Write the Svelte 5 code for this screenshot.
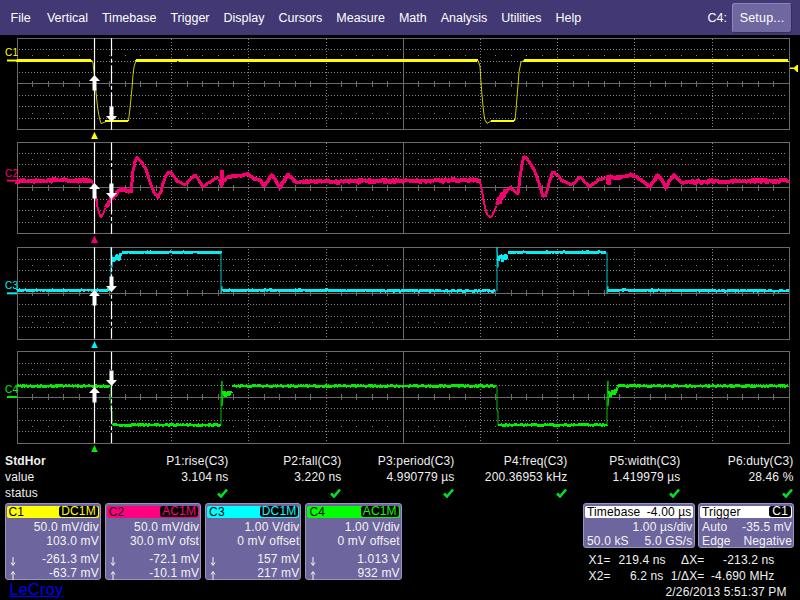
<script>
  // scope screen: four stacked grids, measurement table, channel descriptors
  const menu = ['File', 'Vertical', 'Timebase', 'Trigger', 'Display', 'Cursors', 'Measure', 'Math', 'Analysis', 'Utilities', 'Help'];

  const LEFT = 17.3, RIGHT = 789.3, H = 91.4;
  const DIV = (RIGHT - LEFT) / 10, MINOR = DIV / 5;
  const majors = Array.from({ length: 9 }, (_, i) => LEFT + DIV * (i + 1));
  const minors = Array.from({ length: 49 }, (_, i) => LEFT + MINOR * (i + 1));

  // tiny seeded noise so the traces come out the same on every load
  let seed = 12345;
  const rnd = () => (seed = (seed * 16807) % 2147483647) / 2147483647;

  function trace(pts, amp) {
    if (!amp) return pts.map((p) => p.join(',')).join(' ');
    const out = [];
    for (let i = 0; i < pts.length - 1; i++) {
      const [x0, y0] = pts[i], [x1, y1] = pts[i + 1];
      for (let x = x0; x < x1; x += 0.5) {
        let n = (rnd() - 0.5) * 2 * amp;
        if (rnd() < 0.05) n *= 2.2;
        out.push(x + ',' + (y0 + ((y1 - y0) * (x - x0)) / (x1 - x0) + n).toFixed(1));
      }
    }
    return out.join(' ');
  }

  const shift = (pts, dx) => pts.map(([x, y]) => [x + dx, y]);

  const c1 = [
    [2.8, 0.4, [[17, 60.5], [92, 60.5]]],
    [1, 0, [[92, 60.5], [93, 63], [94, 72], [95, 82], [96, 92], [97, 102], [98, 110], [99, 116], [100, 120], [101, 123.5], [104, 122.5], [108, 120.5]]],
    [2, 0, [[105, 121.5], [128.5, 120.5]]],
    [1, 0, [[128.5, 120.5], [130, 108], [131, 98], [132, 88], [133, 75], [134, 67], [136, 60.5]]],
    [2.8, 0.4, [[136, 60.5], [478, 60.5]]],
    [1, 0, [[478, 60.5], [480, 66], [481, 82], [482, 95], [483, 106], [484, 115], [485, 120], [487, 123.5], [491, 121]]],
    [2, 0, [[491, 121], [515, 120.5]]],
    [1, 0, [[515, 120.5], [516, 110], [517, 97], [518, 85], [519, 72], [521, 62], [524, 60.5]]],
    [2.8, 0.4, [[524, 60.5], [789, 60.5]]]
  ];

  const c2 = [
    [3.8, 1.6, [[17, 181], [92, 181]]],
    [2, 0.5, [[92, 181], [94, 190], [96, 198], [98, 210], [101, 218], [103, 214], [106, 207]]],
    [3.8, 1.6, [[106, 207], [111, 200], [114, 196], [118, 192], [122, 189], [127, 192], [131, 193]]],
    [3, 0.8, [[131, 193], [133, 172], [135, 162], [137, 158], [140, 161], [144, 166], [147, 172], [150, 182], [154, 193], [158, 198], [161, 192], [163, 184], [166, 176], [168, 172], [172, 174], [176, 180], [180, 183], [185, 185], [190, 180], [195, 175], [199, 181], [203, 187], [209, 183], [213, 180], [218, 178]]],
    [3, 5.5, [[219, 179], [226, 181]]],
    [3.6, 1, [[226, 178], [235, 176], [242, 176], [248, 174], [254, 179], [260, 180], [264, 187], [272, 175], [276, 181], [280, 188], [284, 181], [288, 175], [296, 183], [302, 182]]],
    [3.8, 1.6, [[302, 182], [480, 180.5]]],
    [2, 0.5, [[480, 181], [482, 192], [484, 203], [486, 212], [488, 216], [491, 218], [494, 212], [497, 205]]],
    [3.4, 4.5, [[497, 203], [505, 193]]],
    [3, 0.8, [[505, 193], [510, 188], [513, 190], [516, 193], [518, 194], [520, 178], [522, 165], [524, 157], [527, 159], [530, 164], [534, 170], [538, 180], [541, 190], [543, 197], [546, 195], [550, 180], [553, 172], [557, 175], [562, 181], [571, 185], [575, 183], [580, 177], [585, 182], [589, 187], [595, 183], [600, 179], [606, 178]]],
    [3, 6, [[607, 179], [613, 181]]],
    [3.6, 1, [[613, 179], [620, 178], [632, 175], [637, 178], [642, 181], [650, 187], [654, 181], [658, 175], [662, 181], [666, 188], [670, 180], [674, 175], [678, 179], [683, 184], [690, 182]]],
    [3.8, 1.6, [[690, 182], [789, 181]]]
  ];

  const c3Edge = [[111, 291], [111, 247], [112, 267], [112, 255]];
  const c3Ring = [[112, 258], [116, 258], [122, 255]];
  const c3Fall = [[221, 252], [221, 293], [222, 286], [222, 289]];
  const c3 = [
    [2.8, 0.7, [[17, 290], [110, 290]]],
    [1, 0, c3Edge],
    [2.4, 3.5, c3Ring],
    [2.8, 0.6, [[122, 252], [221, 252]]],
    [1, 0, c3Fall],
    [2.8, 0.7, [[222, 290], [496, 290.5]]],
    [1, 0, shift(c3Edge, 386)],
    [2.4, 3.5, shift(c3Ring, 386)],
    [2.8, 0.6, [[508, 252], [607, 252]]],
    [1, 0, shift(c3Fall, 386)],
    [2.8, 0.7, [[608, 290], [789, 290.5]]]
  ];

  const c4Fall = [[111, 386], [111, 411], [112, 411], [112, 425]];
  const c4Rise = [[221, 425], [221, 399], [222, 381], [222, 406], [223, 394]];
  const c4Ring = [[223, 394], [228, 393], [232, 389]];
  const c4 = [
    [2.8, 0.6, [[17, 386], [110, 386]]],
    [1, 0, c4Fall],
    [2.8, 0.6, [[113, 425], [221, 425]]],
    [1, 0, c4Rise],
    [2.4, 3.5, c4Ring],
    [2.8, 0.6, [[232, 386], [496, 386]]],
    [1, 0, shift(c4Fall, 386)],
    [2.8, 0.6, [[499, 425], [607, 425]]],
    [1, 0, shift(c4Rise, 386)],
    [2.4, 3.5, shift(c4Ring, 386)],
    [2.8, 0.6, [[618, 386], [789, 386]]]
  ];

  const plots = [
    { name: 'C1', color: '#ffff00', origin: 35, top: 38.3, zero: 60.5, label: 56, segs: c1, upTip: 75, downEnd: 122 },
    { name: 'C2', color: '#f5006e', origin: 139.33, top: 142.4, zero: 181, label: 177, segs: c2, upTip: 183, downEnd: 199 },
    { name: 'C3', color: '#00f0f5', origin: 243.67, top: 247.3, zero: 293, label: 289, segs: c3, upTip: 290, downEnd: 292 },
    { name: 'C4', color: '#00f000', origin: 348, top: 351.7, zero: 397, label: 393, segs: c4, upTip: 387, downEnd: 386 }
  ].map((p) => ({ ...p, segs: p.segs.map(([w, amp, pts]) => ({ w, d: trace(pts, amp) })) }));

  const measures = [
    ['P1:rise(C3)', '3.104 ns'],
    ['P2:fall(C3)', '3.220 ns'],
    ['P3:period(C3)', '4.990779 µs'],
    ['P4:freq(C3)', '200.36953 kHz'],
    ['P5:width(C3)', '1.419979 µs'],
    ['P6:duty(C3)', '28.46 %']
  ];

  const channels = [
    { name: 'C1', coupling: 'DC1M', color: '#ffff00', rows: ['50.0 mV/div', '103.0 mV'], down: '-261.3 mV', up: '-63.7 mV' },
    { name: 'C2', coupling: 'AC1M', color: '#ff0080', rows: ['50.0 mV/div', '30.0 mV ofst'], down: '-72.1 mV', up: '-10.1 mV' },
    { name: 'C3', coupling: 'DC1M', color: '#00ffff', rows: ['1.00 V/div', '0 mV offset'], down: '157 mV', up: '217 mV' },
    { name: 'C4', coupling: 'AC1M', color: '#00ff00', rows: ['1.00 V/div', '0 mV offset'], down: '1.013 V', up: '932 mV' }
  ];

  const CURSOR_A = 94.5, CURSOR_B = 111.5;
  const upArrow = (x, t) => `${x},${t} ${x + 5.5},${t + 6} ${x + 2},${t + 6} ${x + 2},${t + 15.5} ${x - 2},${t + 15.5} ${x - 2},${t + 6} ${x - 5.5},${t + 6}`;
  const downArrow = (x, b) => `${x},${b} ${x + 5.5},${b - 6} ${x + 2},${b - 6} ${x + 2},${b - 15.5} ${x - 2},${b - 15.5} ${x - 2},${b - 6} ${x - 5.5},${b - 6}`;
</script>

<div class="screen">
  <header class="menubar">
    <nav class="menu">
      {#each menu as item}<span>{item}</span>{/each}
    </nav>
    <span class="active-ch">C4:</span>
    <button class="setup">Setup...</button>
  </header>

  <section class="scope">
    {#each plots as p}
      <svg class="plot" viewBox="0 {p.origin} 800 104.33">
        <rect class="frame" x={LEFT} y={p.top} width={RIGHT - LEFT} height={H} />
        {#each [1, 2, 3, 5, 6, 7] as r}
          <line class="dots" x1={LEFT + 2} x2={RIGHT - 2} y1={p.top + (r * H) / 8} y2={p.top + (r * H) / 8} />
        {/each}
        {#each majors as x, i}
          {#if i === 4}
            <line class="solid" x1={x} x2={x} y1={p.top} y2={p.top + H} />
          {:else}
            <line class="dots" x1={x} x2={x} y1={p.top + 1} y2={p.top + H} />
          {/if}
        {/each}
        <line class="solid" x1={LEFT} x2={RIGHT} y1={p.top + H / 2} y2={p.top + H / 2} />
        {#each minors as x, i}
          {#if (i + 1) % 5}
            <line class="solid" x1={x} x2={x} y1={p.top + H / 2 - 3} y2={p.top + H / 2 + 3} />
            <rect class="dot" x={x - 0.5} y={p.top + (H * 1.5) / 8} width="1" height="1" />
            <rect class="dot" x={x - 0.5} y={p.top + (H * 6.5) / 8} width="1" height="1" />
          {/if}
        {/each}

        <text class="ch-label" x="5" y={p.label} fill={p.color}>{p.name}</text>
        <line x1="7" x2="17" y1={p.zero} y2={p.zero} stroke={p.color} stroke-width="2" />
        {#each p.segs as s}
          <polyline class="wave" points={s.d} stroke={p.color} stroke-width={s.w} stroke-opacity={s.w === 1 ? 0.8 : 1} />
        {/each}
        <polygon points="{CURSOR_A - 3.5},{p.top + H + 9.5} {CURSOR_A},{p.top + H + 2} {CURSOR_A + 3.5},{p.top + H + 9.5}" fill={p.color} />
        {#if p.name === 'C1'}
          <polygon points="790,67.5 794,67.5 797,65 798,65 798,72 797,72 794,69 790,69" fill={p.color} />
        {/if}
      </svg>
    {/each}

    <svg class="cursors" viewBox="0 35 800 417.3">
      {#each plots as p}
        <line class="cur" x1={CURSOR_A} x2={CURSOR_A} y1={p.top} y2={p.top + H} />
        <line class="cur dashed" x1={CURSOR_B} x2={CURSOR_B} y1={p.top} y2={p.top + H} />
        <polygon points={upArrow(CURSOR_A, p.upTip)} fill="#fff" />
        <polygon points={downArrow(CURSOR_B, p.downEnd)} fill="#fff" />
      {/each}
    </svg>
  </section>

  <section class="measures">
    <div class="m-label bold">StdHor</div>
    {#each measures as m}<div class="m-cell">{m[0]}</div>{/each}
    <div class="m-label">value</div>
    {#each measures as m}<div class="m-cell">{m[1]}</div>{/each}
    <div class="m-label">status</div>
    {#each measures as m}
      <div class="m-cell">
        <svg class="check" viewBox="0 0 11 10"><polyline points="1,5.5 4,8.5 10,1.5" /></svg>
      </div>
    {/each}
  </section>

  <section class="lower">
    <div class="left">
      <div class="channels">
        {#each channels as ch}
          <div class="box ch">
            <div class="band" style="background:{ch.color}">
              <span>{ch.name}</span>
              <span class="badge" style="color:{ch.color}">{ch.coupling}</span>
            </div>
            {#each ch.rows as r}<div class="row right">{r}</div>{/each}
            <div class="row between gap">
              <svg class="arr" viewBox="0 0 6 9"><path d="M3 0V8M1 5.5L3 8.5L5 5.5" /></svg>
              <span>{ch.down}</span>
            </div>
            <div class="row between">
              <svg class="arr" viewBox="0 0 6 9"><path d="M3 9V1M1 3.5L3 0.5L5 3.5" /></svg>
              <span>{ch.up}</span>
            </div>
          </div>
        {/each}
      </div>
      <div class="logo">LeCroy</div>
    </div>

    <div class="side">
      <div class="tb-row">
        <div class="box tb">
          <div class="band white"><span>Timebase</span><span>-4.00 µs</span></div>
          <div class="row right">1.00 µs/div</div>
          <div class="row between"><span>50.0 kS</span><span>5.0 GS/s</span></div>
        </div>
        <div class="box trig">
          <div class="band white"><span>Trigger</span><span class="badge mono">C1</span></div>
          <div class="row between"><span>Auto</span><span>-35.5 mV</span></div>
          <div class="row between"><span>Edge</span><span>Negative</span></div>
        </div>
      </div>
      <div class="readout">
        <span>X1=</span><span class="r">219.4 ns</span><span class="r">ΔX=</span><span class="r">-213.2 ns</span>
        <span>X2=</span><span class="r">6.2 ns</span><span class="r">1/ΔX=</span><span class="r">-4.690 MHz</span>
      </div>
      <div class="date">2/26/2013 5:51:37 PM</div>
    </div>
  </section>
</div>

<style>
  :global(body) { margin: 0; background: #000; }

  .screen {
    width: 800px;
    height: 600px;
    background: #000;
    color: #f0f0f0;
    font-family: "Liberation Sans", Arial, sans-serif;
    font-size: 12px;
    letter-spacing: 0.15px;
    overflow: hidden;
    display: flex;
    flex-direction: column;
  }

  /* top menu */
  .menubar {
    height: 35px;
    flex: none;
    background: #423873;
    display: flex;
    align-items: center;
    padding: 0 8px 0 10.5px;
    font-size: 12.5px;
    letter-spacing: 0;
    color: #fff;
  }
  .menu { display: flex; gap: 14px; flex: 1; }
  .menu span:first-child { margin-right: 2.3px; }
  .active-ch { margin-right: 5px; }
  .setup {
    width: 60px;
    height: 30px;
    padding: 0;
    background: #6f679f;
    color: #fff;
    font: inherit;
    letter-spacing: 0.2px;
    border: 1px solid #8d86b8;
    border-right-color: #352c60;
    border-bottom-color: #352c60;
    border-radius: 3px;
  }

  /* grids */
  .scope { position: relative; height: 417.3px; flex: none; }
  .plot { display: block; width: 800px; height: 104.33px; }
  .cursors { position: absolute; inset: 0; width: 800px; height: 417.3px; }
  .frame { fill: none; stroke: #6a6a6a; stroke-width: 1; shape-rendering: crispEdges; }
  .solid { stroke: #6a6a6a; stroke-width: 1; shape-rendering: crispEdges; }
  .dots { stroke: #858585; stroke-width: 1; stroke-dasharray: 1 2; shape-rendering: crispEdges; }
  .dot { fill: #7a7a7a; shape-rendering: crispEdges; }
  .wave { fill: none; stroke-linejoin: bevel; shape-rendering: crispEdges; }
  .ch-label { font-size: 10px; letter-spacing: 0.3px; }
  .cur { stroke: #fff; stroke-width: 1.2; }
  .dashed { stroke-dasharray: 18 2.5 4 2.5; }

  /* measurement table */
  .measures {
    height: 49.9px;
    padding-top: 0.8px;
    flex: none;
    display: grid;
    grid-template-columns: 115.5px repeat(6, 113px);
    grid-auto-rows: 16px;
    align-items: center;
  }
  .m-label { padding-left: 5px; }
  .bold { font-weight: 700; }
  .m-cell { text-align: right; white-space: nowrap; display: flex; justify-content: flex-end; }
  .check { width: 11px; height: 10px; margin-right: 1px; }
  .check polyline { fill: none; stroke: #00e028; stroke-width: 2.6; }

  /* descriptor boxes */
  .lower { display: flex; padding-left: 4.5px; flex: 1; }
  .left { width: 578.5px; flex: none; }
  .channels { display: flex; gap: 4px; }
  .box {
    background: #6d659d;
    border: 1px solid #9a94c0;
    border-radius: 3px;
    padding: 2px 1px 0;
    box-sizing: border-box;
    white-space: nowrap;
  }
  .ch { width: 96.3px; height: 77px; }
  .band {
    height: 12px;
    display: flex;
    justify-content: space-between;
    align-items: center;
    padding: 0 1px 0 2px;
    color: #000;
    border-radius: 2px;
    margin-bottom: 2.5px;
    line-height: 12px;
  }
  .badge {
    background: #000;
    border-radius: 3px;
    padding: 0 2px;
    height: 11px;
    line-height: 11px;
  }
  .mono { color: #fff; padding: 0 3px; }
  .white { background: #fff; }
  .row { height: 14px; line-height: 14px; padding: 0 0 0 2px; color: #f4f4f4; }
  .right { text-align: right; }
  .between { display: flex; justify-content: space-between; }
  .gap { margin-top: 3.5px; }
  .arr { width: 6px; height: 9px; align-self: flex-end; margin-left: 1px; }
  .arr path { fill: none; stroke: #f4f4f4; stroke-width: 1; }
  .logo {
    margin: 1px 0 0 5px;
    color: #0000ff;
    font-size: 16px;
    line-height: 18px;
    letter-spacing: 0.4px;
    text-decoration: underline;
  }

  .side { width: 212px; flex: none; }
  .tb-row { display: flex; gap: 3.5px; }
  .tb { width: 111.5px; height: 45px; }
  .trig { width: 96px; height: 45px; }
  .readout {
    display: grid;
    grid-template-columns: 30px 45px 41px 70px;
    grid-auto-rows: 16px;
    align-items: center;
    margin: 4px 0 0 5.5px;
  }
  .r { text-align: right; white-space: nowrap; }
  .date { margin: 1px 0 0 82.5px; line-height: 15px; white-space: nowrap; letter-spacing: 0.15px; }
</style>
